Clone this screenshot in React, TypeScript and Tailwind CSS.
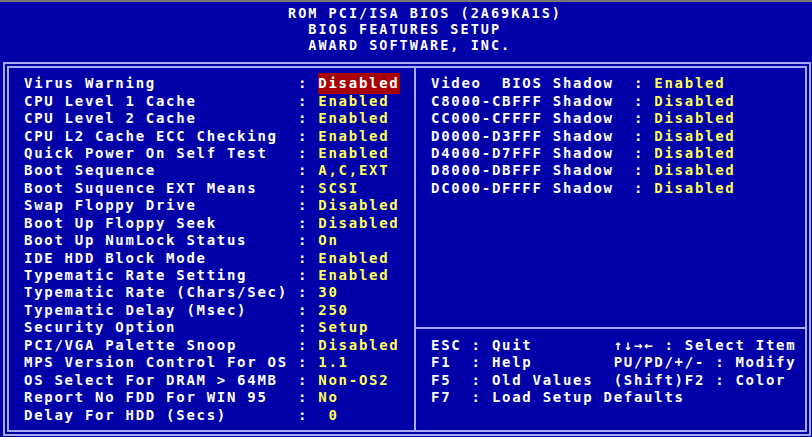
import React from 'react'

type Row = { label: string; value: string; active?: boolean }

const features: Row[] = [
    { label: 'Virus Warning', value: 'Disabled', active: true },
    { label: 'CPU Level 1 Cache', value: 'Enabled' },
    { label: 'CPU Level 2 Cache', value: 'Enabled' },
    { label: 'CPU L2 Cache ECC Checking', value: 'Enabled' },
    { label: 'Quick Power On Self Test', value: 'Enabled' },
    { label: 'Boot Sequence', value: 'A,C,EXT' },
    { label: 'Boot Suquence EXT Means', value: 'SCSI' },
    { label: 'Swap Floppy Drive', value: 'Disabled' },
    { label: 'Boot Up Floppy Seek', value: 'Disabled' },
    { label: 'Boot Up NumLock Status', value: 'On' },
    { label: 'IDE HDD Block Mode', value: 'Enabled' },
    { label: 'Typematic Rate Setting', value: 'Enabled' },
    { label: 'Typematic Rate (Chars/Sec)', value: '30' },
    { label: 'Typematic Delay (Msec)', value: '250' },
    { label: 'Security Option', value: 'Setup' },
    { label: 'PCI/VGA Palette Snoop', value: 'Disabled' },
    { label: 'MPS Version Control For OS', value: '1.1' },
    { label: 'OS Select For DRAM > 64MB', value: 'Non-OS2' },
    { label: 'Report No FDD For WIN 95', value: 'No' },
    { label: 'Delay For HDD (Secs)', value: ' 0' },
]

const shadows: Row[] = [
    { label: 'Video  BIOS Shadow', value: 'Enabled' },
    { label: 'C8000-CBFFF Shadow', value: 'Disabled' },
    { label: 'CC000-CFFFF Shadow', value: 'Disabled' },
    { label: 'D0000-D3FFF Shadow', value: 'Disabled' },
    { label: 'D4000-D7FFF Shadow', value: 'Disabled' },
    { label: 'D8000-DBFFF Shadow', value: 'Disabled' },
    { label: 'DC000-DFFFF Shadow', value: 'Disabled' },
]

const keys: [string, string][] = [
    ['ESC : Quit', '↑↓→← : Select Item'],
    ['F1  : Help', 'PU/PD/+/- : Modify'],
    ['F5  : Old Values', '(Shift)F2 : Color'],
    ['F7  : Load Setup Defaults', ''],
]

const SettingRow = ({ row, labelWidth }: { row: Row; labelWidth: string }) => (
    <div className="flex h-[17.45px] items-center whitespace-pre">
        <span className={`${labelWidth} shrink-0 text-white`}>{row.label}</span>
        <span className="w-[20.3px] shrink-0 text-white">:</span>
        <span className={row.active ? 'bg-[#a80000] text-white' : 'text-[#ffff55]'}>{row.value}</span>
    </div>
)

const App = () => {
    return (
        <div className="w-[812px] h-[437px] overflow-hidden bg-[#0000a8] flex flex-col font-['DejaVu_Sans_Mono','Liberation_Mono',monospace]">
            <div className="h-[2px] shrink-0 bg-[#767676]" />

            <header className="h-[60px] shrink-0 pt-[3px] pl-[288px] whitespace-pre text-[13.5px] leading-[16px] tracking-[2.02px] font-bold text-white">
                <div>ROM PCI/ISA BIOS (2A69KA1S)</div>
                <div>  BIOS FEATURES SETUP</div>
                <div>  AWARD SOFTWARE, INC.</div>
            </header>

            <div className="ml-[3px] w-[808px] h-[374px] flex border-[6px] border-double border-[#a8a8ff] text-[14px] font-bold tracking-[1.72px]">
                <section className="w-[405px] shrink-0 pt-[7px] pl-[15px]">
                    {features.map((row) => (
                        <SettingRow key={row.label} row={row} labelWidth="w-[274px]" />
                    ))}
                </section>

                <div className="w-[2px] shrink-0 bg-[#a8a8ff]" />

                <section className="flex-1 flex flex-col">
                    <div className="h-[261px] shrink-0 pt-[7px] pl-[15px] border-b-2 border-[#a8a8ff]">
                        {shadows.map((row) => (
                            <SettingRow key={row.label} row={row} labelWidth="w-[203px]" />
                        ))}
                    </div>
                    <div className="pt-[7.5px] pl-[15px] text-white whitespace-pre">
                        {keys.map(([left, right]) => (
                            <div key={left} className="flex h-[17.45px] items-center">
                                <span className="w-[182.7px] shrink-0 overflow-visible">{left}</span>
                                <span>{right}</span>
                            </div>
                        ))}
                    </div>
                </section>
            </div>
        </div>
    )
}

export default App
